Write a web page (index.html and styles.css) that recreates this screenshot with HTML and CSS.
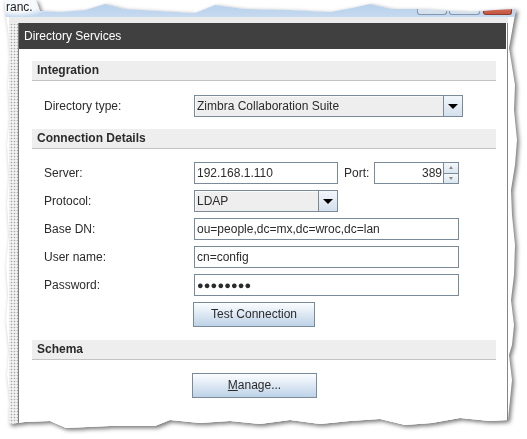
FILE: index.html
```html
<!DOCTYPE html>
<html>
<head>
<meta charset="utf-8">
<link rel="stylesheet" href="styles.css">
</head>
<body>
<div class="paper">
  <div class="sheet">
    <div class="titlebar">
      <span class="apptitle">ranc.</span>
      <div class="winbtns"><span class="wb"></span><span class="wb wb2"></span><span class="wb close"></span></div>
    </div>
    <div class="frame">
      <div class="dots"></div>
      <div class="dialog">
        <div class="dlg-head">Directory Services</div>
        <div class="content">
          <div class="bar">Integration</div>
          <div class="row r-first">
            <label>Directory type:</label>
            <div class="combo w-type"><span class="val">Zimbra Collaboration Suite</span><span class="arrow"><i class="tri"></i></span></div>
          </div>
          <div class="bar bar-gap">Connection Details</div>
          <div class="rows">
            <div class="row">
              <label>Server:</label>
              <div class="field w-server">192.168.1.110</div>
              <span class="port-l">Port:</span>
              <div class="field w-port">389</div>
              <div class="spin"><span><i class="up"></i></span><span><i class="down"></i></span></div>
            </div>
            <div class="row">
              <label>Protocol:</label>
              <div class="combo w-proto"><span class="val">LDAP</span><span class="arrow"><i class="tri"></i></span></div>
            </div>
            <div class="row">
              <label>Base DN:</label>
              <div class="field w-long">ou=people,dc=mx,dc=wroc,dc=lan</div>
            </div>
            <div class="row">
              <label>User name:</label>
              <div class="field w-long">cn=config</div>
            </div>
            <div class="row">
              <label>Password:</label>
              <div class="field w-long pass">●●●●●●●●</div>
            </div>
          </div>
          <div class="btn btn-test">Test Connection</div>
          <div class="bar bar-gap2">Schema</div>
          <div class="btn btn-manage"><u>M</u>anage...</div>
        </div>
      </div>
    </div>
  </div>
</div>
</body>
</html>
```

FILE: styles.css
```css
* { box-sizing: border-box; }
html, body { margin: 0; padding: 0; background: #fff; }
body {
  width: 527px;
  height: 439px;
  overflow: hidden;
  font-family: "Liberation Sans", Arial, sans-serif;
  font-size: 12px;
  color: #2b2b2b;
}
.paper {
  width: 527px;
  height: 439px;
  filter: drop-shadow(2px 2px 2px rgba(0, 0, 0, 0.55));
}
.sheet {
  width: 527px;
  height: 439px;
  overflow: hidden;
  display: flex;
  flex-direction: column;
  background: #fff;
  clip-path: polygon(4px 0, 36px 0, 40px 11px, 60px 12px, 85px 10px, 105px 4px, 125px 9px, 160px 11px, 195px 13px, 215px 5px, 245px 9px, 290px 10px, 330px 12px, 352px 8px, 370px 4px, 392px 9px, 420px 9px, 448px 11px, 470px 12px, 495px 10px, 516px 9px,
    514px 20px, 509px 48px, 511px 60px, 515px 85px, 514px 110px, 517px 140px, 515px 165px, 511px 190px, 512px 215px, 515px 245px, 514px 275px, 511px 300px, 514px 325px, 512px 345px, 509px 355px, 512px 380px, 510px 400px, 508px 420px,
    490px 421px, 460px 418px, 432px 423px, 405px 425px, 380px 419px, 350px 421px, 320px 424px, 290px 420px, 260px 424px, 230px 421px, 200px 423px, 170px 420px, 155px 426px, 110px 426px, 66px 428px, 50px 421px, 25px 422px, 9px 424px,
    10px 400px, 7px 375px, 9px 350px, 6px 320px, 8px 295px, 6px 265px, 9px 235px, 7px 205px, 9px 175px, 7px 145px, 10px 115px, 8px 85px, 10px 55px, 8px 30px, 6px 17px);
}
.titlebar {
  flex: none;
  height: 17px;
  display: flex;
  align-items: flex-end;
  background: radial-gradient(ellipse 34px 12px at 18px 5px, #f6f9fc 0, #f6f9fc 60%, rgba(246,249,252,0) 100%), linear-gradient(#b3cde9, #c6daf0);
}
.apptitle {
  align-self: flex-start;
  margin-top: 1px;
  padding-left: 6px;
  line-height: 12px;
  color: #1a1a1a;
}
.winbtns {
  margin-left: auto;
  margin-right: 15px;
  margin-bottom: 2px;
  display: flex;
}
.wb {
  width: 30px;
  height: 18px;
  border: 1px solid #8397ae;
  border-top: none;
  border-radius: 0 0 3px 3px;
  background: linear-gradient(#eef3f9, #d3dfec);
}
.wb2 { width: 31px; margin-left: 2px; }
.wb.close {
  width: 29px;
  margin-left: 3px;
  border-color: #8e3d2d;
  background: linear-gradient(#e6a08f, #c6553e);
}
.frame {
  flex: 1;
  display: flex;
  margin-left: 9px;
  width: 499px;
  padding-top: 6px;
  background: #ebebeb;
}
.dots {
  flex: none;
  width: 9px;
  background-color: #f3f3f3;
  background-image: radial-gradient(circle, #a9a9a9 0, #a9a9a9 0.7px, rgba(0,0,0,0) 1.1px);
  background-size: 3px 3px;
  background-position: 4px 0;
}
.dialog {
  flex: 1;
  display: flex;
  flex-direction: column;
  background: #fff;
  border-left: 1px solid #7c7c7c;
  border-right: 1px solid #858585;
}
.dlg-head {
  flex: none;
  height: 26px;
  margin-right: 1px;
  padding-left: 5px;
  line-height: 26px;
  background: #404040;
  color: #fff;
}
.content {
  padding: 12px 10px 0 13px;
}
.bar {
  width: 464px;
  height: 20px;
  padding-left: 5px;
  line-height: 19px;
  font-weight: bold;
  background: #eeeeee;
  border-bottom: 1px solid #c3c3c3;
}
.bar-gap { margin-top: 12px; }
.bar-gap2 { margin-top: 13px; }
.row {
  display: flex;
  align-items: center;
  height: 22px;
  padding-left: 12px;
}
.row label {
  flex: none;
  width: 150px;
}
.r-first { margin-top: 14px; }
.rows {
  margin-top: 13px;
  display: flex;
  flex-direction: column;
  gap: 6px;
}
.combo {
  display: flex;
  height: 22px;
  border: 1px solid #7a8a99;
  background: #eeeeee;
  box-shadow: inset 1px 1px 0 #fafafa;
}
.combo .val {
  flex: 1;
  padding-left: 2px;
  line-height: 20px;
  white-space: nowrap;
}
.combo .arrow {
  flex: none;
  width: 19px;
  border-left: 1px solid #7a8a99;
  background: linear-gradient(#f2f6fa, #d3e0ed);
  display: flex;
  align-items: center;
  justify-content: center;
}
.tri {
  display: block;
  width: 0;
  height: 0;
  border-left: 5px solid transparent;
  border-right: 5px solid transparent;
  border-top: 5px solid #000;
}
.w-type { width: 269px; }
.w-proto { width: 144px; }
.field {
  height: 22px;
  border: 1px solid #7a8a99;
  background: #fff;
  padding-left: 2px;
  line-height: 20px;
  white-space: nowrap;
}
.w-server { width: 144px; }
.w-port { width: 70px; text-align: right; padding-right: 1px; }
.w-long { width: 265px; }
.port-l {
  width: 30px;
  margin-left: 6px;
}
.pass {
  font-size: 11px;
  letter-spacing: 0.15px;
}
.spin {
  width: 15px;
  height: 22px;
  display: flex;
  flex-direction: column;
}
.spin span {
  flex: 1;
  display: flex;
  align-items: center;
  justify-content: center;
  border: 1px solid #7a8a99;
  border-left: none;
  background: linear-gradient(#f5f8fb, #dbe5ef);
}
.spin span + span { border-top: none; }
.up, .down {
  display: block;
  width: 0;
  height: 0;
  border-left: 2.5px solid transparent;
  border-right: 2.5px solid transparent;
}
.up { border-bottom: 3px solid #888; }
.down { border-top: 3px solid #888; }
.btn {
  height: 25px;
  border: 1px solid #7a8a99;
  background: linear-gradient(#fbfdff 0%, #e6eef7 35%, #bdd2e7 100%);
  text-align: center;
  line-height: 23px;
}
.btn u { text-decoration: underline; }
.btn-test {
  width: 122px;
  margin-left: 161px;
  margin-top: 6px;
}
.btn-manage {
  width: 125px;
  margin-left: 160px;
  margin-top: 13px;
}
```
